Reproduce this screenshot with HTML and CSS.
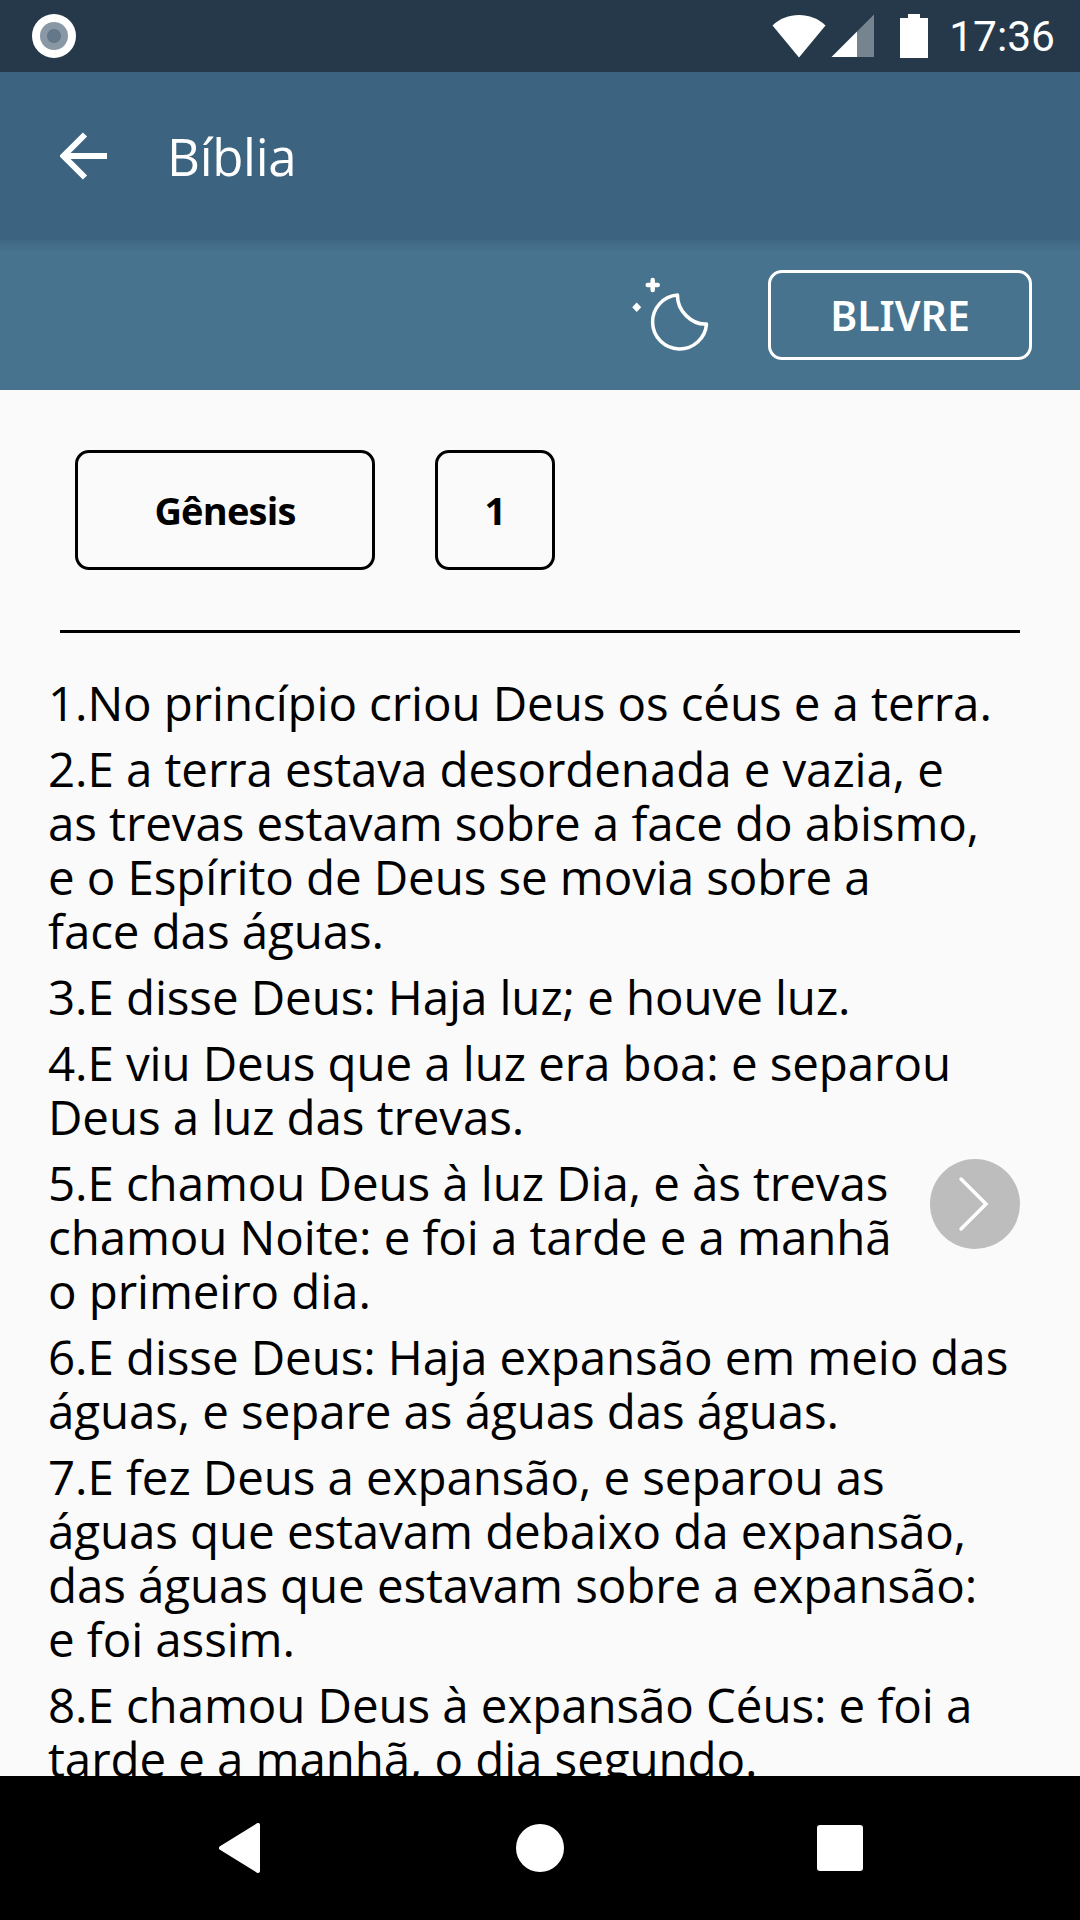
FILE: index.html
```html
<!DOCTYPE html>
<html lang="pt-br">
<head>
  <meta charset="UTF-8">
  <title>Bíblia</title>
  <link rel="stylesheet" href="styles.css">
</head>
<body>
  <div class="status-bar">
    <div class="status-dot"><span></span></div>
    <div class="status-right">
      <svg class="ic-wifi" width="54" height="44" viewBox="0 0 54 44"><path d="M0.500 11.500C7.500 4.500 17 1 27 1s19.500 3.500 26.500 10.500L27 43.500z" fill="#fff"/></svg>
      <svg class="ic-signal" width="44" height="44" viewBox="0 0 44 44"><path d="M43 0.500V43H26V17.500z" fill="#75848f"/><path d="M26 17.500V43H0.500z" fill="#fff"/></svg>
      <svg class="ic-battery" width="28" height="44" viewBox="0 0 28 44"><path d="M8 0h12v4h8v44H0V4h8z" fill="#fff"/></svg>
      <span class="clock">17:36</span>
    </div>
  </div>

  <header class="app-bar">
    <svg class="back" width="48" height="48" viewBox="0 0 48 48"><path d="M47 24H4M25 2.500L3.500 24 25 45.500" fill="none" stroke="#fff" stroke-width="6"/></svg>
    <h1>Bíblia</h1>
  </header>

  <div class="sub-bar">
    <svg class="moon" width="80" height="80" viewBox="0 0 80 80">
      <path d="M47.500 20A27 27 0 1 0 76.500 49C62 50 47 36 47.500 20Z" fill="none" stroke="#fff" stroke-width="3.500" stroke-linejoin="round"/>
      <path d="M22.700 5v10M17.700 10h10" stroke="#fff" stroke-width="4.500" stroke-linecap="round"/>
      <path d="M6.700 27.500l4.500 4.800-4.500 4.800-4.500-4.800z" fill="#fff"/>
    </svg>
    <button class="version">BLIVRE</button>
  </div>

  <main class="content">
    <div class="pickers">
      <button class="picker book">Gênesis</button>
      <button class="picker chapter">1</button>
    </div>
    <hr class="divider">
    <div class="verses">
      <p>1.No princípio criou Deus os céus e a terra.</p>
      <p>2.E a terra estava desordenada e vazia, e<br>as trevas estavam sobre a face do abismo,<br>e o Espírito de Deus se movia sobre a<br>face das águas.</p>
      <p>3.E disse Deus: Haja luz; e houve luz.</p>
      <p>4.E viu Deus que a luz era boa: e separou<br>Deus a luz das trevas.</p>
      <p>5.E chamou Deus à luz Dia, e às trevas<br>chamou Noite: e foi a tarde e a manhã<br>o primeiro dia.</p>
      <p>6.E disse Deus: Haja expansão em meio das<br>águas, e separe as águas das águas.</p>
      <p>7.E fez Deus a expansão, e separou as<br>águas que estavam debaixo da expansão,<br>das águas que estavam sobre a expansão:<br>e foi assim.</p>
      <p>8.E chamou Deus à expansão Céus: e foi a<br>tarde e a manhã, o dia segundo.</p>
    </div>
    <button class="next">
      <svg width="40" height="56" viewBox="0 0 40 56"><path d="M6 3l25 25L6 53" fill="none" stroke="#fff" stroke-width="3.500" stroke-linecap="round"/></svg>
    </button>
  </main>

  <nav class="nav-bar">
    <svg width="44" height="50" viewBox="0 0 44 50"><path d="M41 2v46L4 25z" fill="#fff" stroke="#fff" stroke-width="4" stroke-linejoin="round"/></svg>
    <div class="nav-home"></div>
    <div class="nav-square"></div>
  </nav>
</body>
</html>
```

FILE: styles.css
```css
* {
  box-sizing: border-box;
}

body {
  margin: 0;
  width: 1080px;
  height: 1920px;
  overflow: hidden;
  display: flex;
  flex-direction: column;
  background-color: #fafafa;
  font-family: "Open Sans", sans-serif;
  color: #000;
}

button {
  font-family: inherit;
  background: none;
  padding: 0;
}

.status-bar {
  height: 72px;
  flex-shrink: 0;
  display: flex;
  align-items: center;
  justify-content: space-between;
  padding: 0 25px 0 32px;
  background-color: #25394b;
}

.status-dot {
  width: 44px;
  height: 44px;
  border-radius: 50%;
  background-color: #fff;
  display: flex;
  align-items: center;
  justify-content: center;
}

.status-dot span {
  width: 28px;
  height: 28px;
  border-radius: 50%;
  background: radial-gradient(circle, #64788a 0 6.500px, #8a98a6 7.500px);
}

.status-right {
  display: flex;
  align-items: center;
}

.ic-wifi {
  margin-right: 5px;
}

.ic-signal {
  margin-right: 25px;
}

.ic-battery {
  margin-right: 21px;
}

.clock {
  font-family: Roboto, sans-serif;
  font-size: 42.500px;
  color: #fff;
}

.app-bar {
  height: 168px;
  flex-shrink: 0;
  display: flex;
  align-items: center;
  padding-left: 60px;
  background-color: #3c6480;
  position: relative;
}

.app-bar h1 {
  margin: 0 0 0 59px;
  font-weight: 400;
  font-size: 51px;
  letter-spacing: -0.300px;
  color: #fff;
}

.sub-bar {
  height: 150px;
  flex-shrink: 0;
  display: flex;
  align-items: center;
  justify-content: flex-end;
  gap: 58px;
  padding-right: 48px;
  background: linear-gradient(#3f6782, #47738f 12px);
}

.version {
  width: 264px;
  height: 90px;
  border: 3px solid #fff;
  border-radius: 14px;
  color: #fff;
  font-family: "Noto Sans", sans-serif;
  font-weight: 600;
  font-size: 41px;
}

.content {
  flex: 1;
  min-height: 0;
  overflow: hidden;
  position: relative;
}

.pickers {
  display: flex;
  gap: 60px;
  padding: 60px 0 0 75px;
}

.picker {
  height: 120px;
  border: 3px solid #000;
  border-radius: 14px;
  color: #000;
  font-weight: 700;
  font-size: 38px;
  letter-spacing: -0.800px;
}

.book {
  width: 300px;
}

.chapter {
  width: 120px;
}

.divider {
  height: 3px;
  margin: 60px 60px 0;
  border: 0;
  background-color: #000;
}

.verses {
  padding: 43px 0 0 48px;
  font-size: 47.500px;
  letter-spacing: -0.100px;
  line-height: 54px;
}

.verses p {
  margin: 0 0 12px;
  white-space: nowrap;
}

.next {
  position: absolute;
  left: 930px;
  top: 769px;
  width: 90px;
  height: 90px;
  border: 0;
  border-radius: 50%;
  background-color: #bdbdbd;
  display: flex;
  align-items: center;
  justify-content: center;
}

.nav-bar {
  height: 144px;
  flex-shrink: 0;
  display: flex;
  align-items: center;
  justify-content: center;
  background-color: #000;
  position: relative;
}

.nav-bar svg {
  margin-right: 255px;
}

.nav-home {
  width: 48px;
  height: 48px;
  border-radius: 50%;
  background-color: #fff;
  margin-right: 253px;
}

.nav-square {
  width: 46px;
  height: 46px;
  border-radius: 3px;
  background-color: #fff;
}
```
